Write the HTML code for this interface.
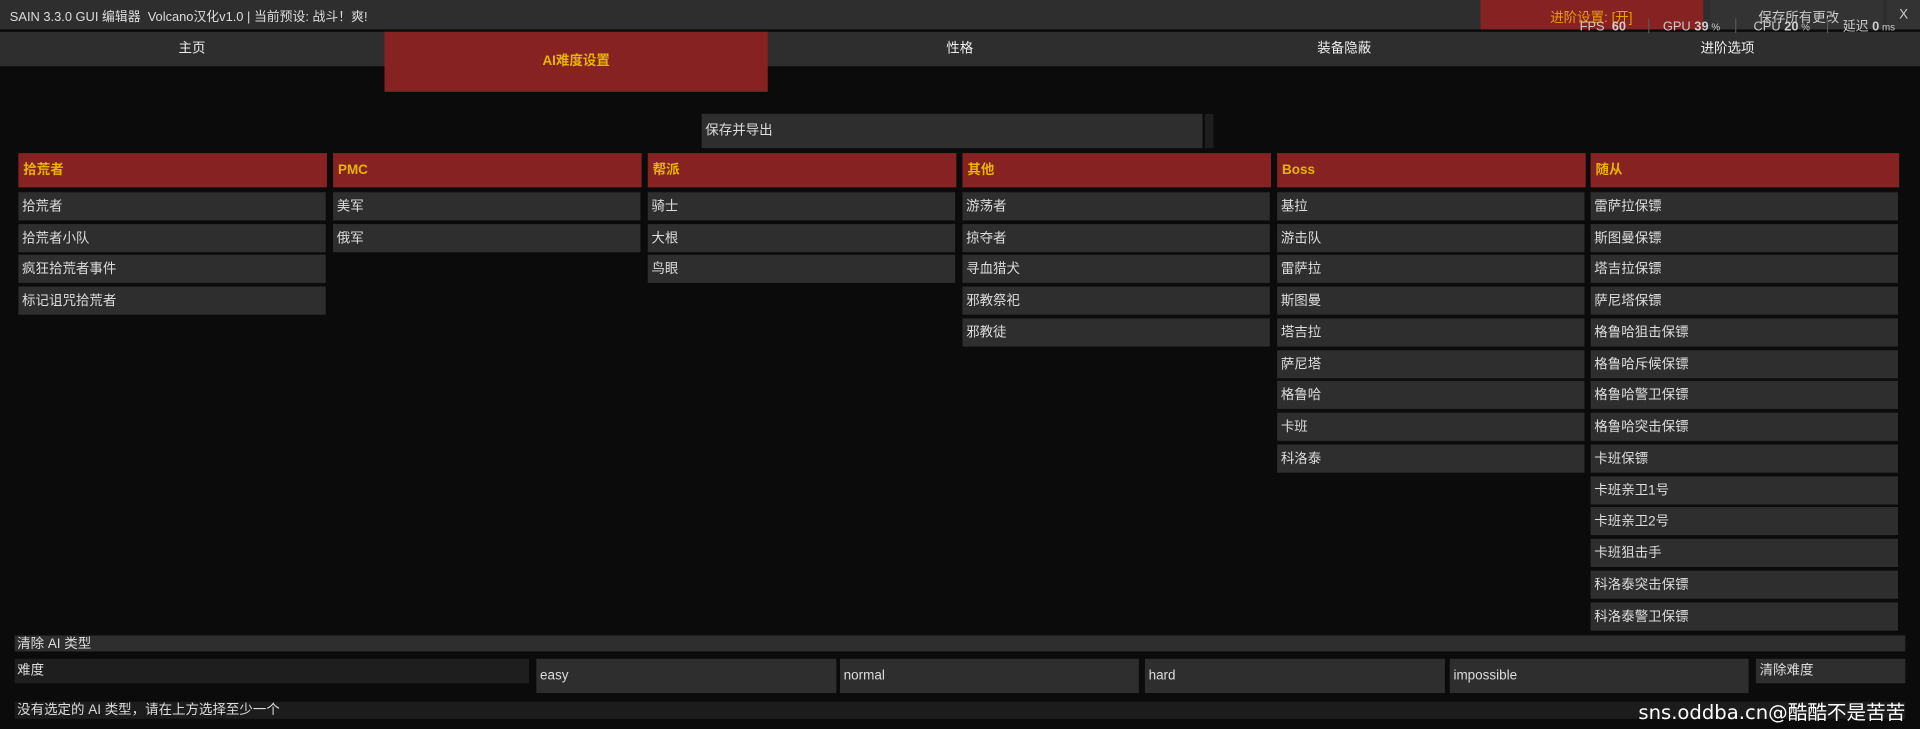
<!DOCTYPE html>
<html><head><meta charset="utf-8"><style>
html,body{margin:0;padding:0;background:#0b0b0b;overflow:hidden;width:1920px;height:728px}
#s{position:absolute;left:0;top:0;width:1568px;height:595px;transform:scale(1.22449);transform-origin:0 0;font-family:"Liberation Sans","Noto Sans CJK SC",sans-serif;color:#ddd;font-size:11px}
.a{position:absolute;box-sizing:border-box;white-space:nowrap}
.g{background:#2e2e2e}
.r{background:#862222}
.it{position:absolute;height:23px;line-height:24px;padding-left:3px;background:#2e2e2e;width:251px;box-sizing:border-box;color:#ddd}
.hd{position:absolute;height:28px;line-height:29px;padding-left:4px;background:#862222;width:252px;box-sizing:border-box;color:#e8b400;font-weight:bold}
.tab{position:absolute;top:26px;height:28px;line-height:28px;text-align:center;width:313.6px;color:#eee}
.st{position:absolute;top:16px;line-height:12px;color:#ccc;font-size:10.5px;white-space:nowrap;z-index:5}
.sep{position:absolute;top:15px;width:1px;height:12px;background:#555;z-index:5}
</style></head><body><div id="s">
<div class="a g" style="left:0;top:0;width:1568px;height:24px"></div>
<div class="a" style="left:8px;top:6px;color:#ddd;font-size:10.5px">SAIN 3.3.0 GUI 编辑器&nbsp; Volcano汉化v1.0 | 当前预设: 战斗！爽!</div>
<div class="a r" style="left:1209px;top:0;width:182px;height:24px"></div>
<div class="a" style="left:1266px;top:6px;color:#e8a000">进阶设置: [开]</div>
<div class="a g" style="left:1397px;top:0;width:141px;height:24px;background:#333"></div>
<div class="a" style="left:1436px;top:6px;color:#ccc">保存所有更改</div>
<div class="a g" style="left:1541px;top:0;width:27px;height:24px;background:#333"></div>
<div class="a" style="left:1551px;top:6px;color:#ccc">X</div>

<div class="a g" style="left:0;top:26px;width:1568px;height:28px"></div>
<div class="tab" style="left:0">主页</div>
<div class="a r" style="left:314px;top:26px;width:313px;height:49px;text-align:center;line-height:49px;color:#e8b400;font-weight:bold">AI难度设置</div>
<div class="tab" style="left:627px">性格</div>
<div class="tab" style="left:941px">装备隐蔽</div>
<div class="tab" style="left:1254px">进阶选项</div>

<div class="st" style="left:1290px">FPS&nbsp; <b>60</b></div>
<div class="sep" style="left:1346px"></div>
<div class="st" style="left:1358px">GPU <b>39</b><span style="font-size:8px"> %</span></div>
<div class="sep" style="left:1417px"></div>
<div class="st" style="left:1432px">CPU <b>20</b><span style="font-size:8px"> %</span></div>
<div class="sep" style="left:1492px"></div>
<div class="st" style="left:1505px">延迟 <b>0</b><span style="font-size:8px"> ms</span></div>

<div class="a g" style="left:573px;top:93px;width:409px;height:28px;line-height:28px;padding-left:3px">保存并导出</div>
<div class="a" style="left:984px;top:93px;width:7px;height:28px;background:#1e1e1e"></div>

<div class="hd" style="left:15px;top:125px">拾荒者</div>
<div class="hd" style="left:272px;top:125px">PMC</div>
<div class="hd" style="left:529px;top:125px">帮派</div>
<div class="hd" style="left:786px;top:125px">其他</div>
<div class="hd" style="left:1043px;top:125px">Boss</div>
<div class="hd" style="left:1299px;top:125px">随从</div>

<div class="it" style="left:15px;top:157px">拾荒者</div>
<div class="it" style="left:15px;top:183px">拾荒者小队</div>
<div class="it" style="left:15px;top:208px">疯狂拾荒者事件</div>
<div class="it" style="left:15px;top:234px">标记诅咒拾荒者</div>

<div class="it" style="left:272px;top:157px">美军</div>
<div class="it" style="left:272px;top:183px">俄军</div>

<div class="it" style="left:529px;top:157px">骑士</div>
<div class="it" style="left:529px;top:183px">大根</div>
<div class="it" style="left:529px;top:208px">鸟眼</div>

<div class="it" style="left:786px;top:157px">游荡者</div>
<div class="it" style="left:786px;top:183px">掠夺者</div>
<div class="it" style="left:786px;top:208px">寻血猎犬</div>
<div class="it" style="left:786px;top:234px">邪教祭祀</div>
<div class="it" style="left:786px;top:260px">邪教徒</div>

<div class="it" style="left:1043px;top:157px">基拉</div>
<div class="it" style="left:1043px;top:183px">游击队</div>
<div class="it" style="left:1043px;top:208px">雷萨拉</div>
<div class="it" style="left:1043px;top:234px">斯图曼</div>
<div class="it" style="left:1043px;top:260px">塔吉拉</div>
<div class="it" style="left:1043px;top:286px">萨尼塔</div>
<div class="it" style="left:1043px;top:311px">格鲁哈</div>
<div class="it" style="left:1043px;top:337px">卡班</div>
<div class="it" style="left:1043px;top:363px">科洛泰</div>

<div class="it" style="left:1299px;top:157px">雷萨拉保镖</div>
<div class="it" style="left:1299px;top:183px">斯图曼保镖</div>
<div class="it" style="left:1299px;top:208px">塔吉拉保镖</div>
<div class="it" style="left:1299px;top:234px">萨尼塔保镖</div>
<div class="it" style="left:1299px;top:260px">格鲁哈狙击保镖</div>
<div class="it" style="left:1299px;top:286px">格鲁哈斥候保镖</div>
<div class="it" style="left:1299px;top:311px">格鲁哈警卫保镖</div>
<div class="it" style="left:1299px;top:337px">格鲁哈突击保镖</div>
<div class="it" style="left:1299px;top:363px">卡班保镖</div>
<div class="it" style="left:1299px;top:389px">卡班亲卫1号</div>
<div class="it" style="left:1299px;top:414px">卡班亲卫2号</div>
<div class="it" style="left:1299px;top:440px">卡班狙击手</div>
<div class="it" style="left:1299px;top:466px">科洛泰突击保镖</div>
<div class="it" style="left:1299px;top:492px">科洛泰警卫保镖</div>

<div class="a g" style="left:12px;top:519px;width:1544px;height:13px;line-height:14px;padding-left:2px">清除 AI 类型</div>
<div class="a" style="left:12px;top:538px;width:420px;height:20px;line-height:20px;padding-left:2px;background:#1e1e1e">难度</div>
<div class="a g" style="left:438px;top:538px;width:245px;height:28px;line-height:28px;padding-left:3px">easy</div>
<div class="a g" style="left:686px;top:538px;width:244px;height:28px;line-height:28px;padding-left:3px">normal</div>
<div class="a g" style="left:935px;top:538px;width:245px;height:28px;line-height:28px;padding-left:3px">hard</div>
<div class="a g" style="left:1184px;top:538px;width:244px;height:28px;line-height:28px;padding-left:3px">impossible</div>
<div class="a g" style="left:1434px;top:538px;width:122px;height:20px;line-height:20px;padding-left:3px">清除难度</div>
<div class="a" style="left:12px;top:573px;width:1544px;height:14px;line-height:14px;padding-left:2px;background:#1c1c1c">没有选定的 AI 类型，请在上方选择至少一个</div>
<div class="a" style="left:1338px;top:568px;color:#fff;font-size:16px;font-family:'DejaVu Sans','Noto Sans CJK SC',sans-serif">sns.oddba.cn@酷酷不是苦苦</div>
</div></body></html>
